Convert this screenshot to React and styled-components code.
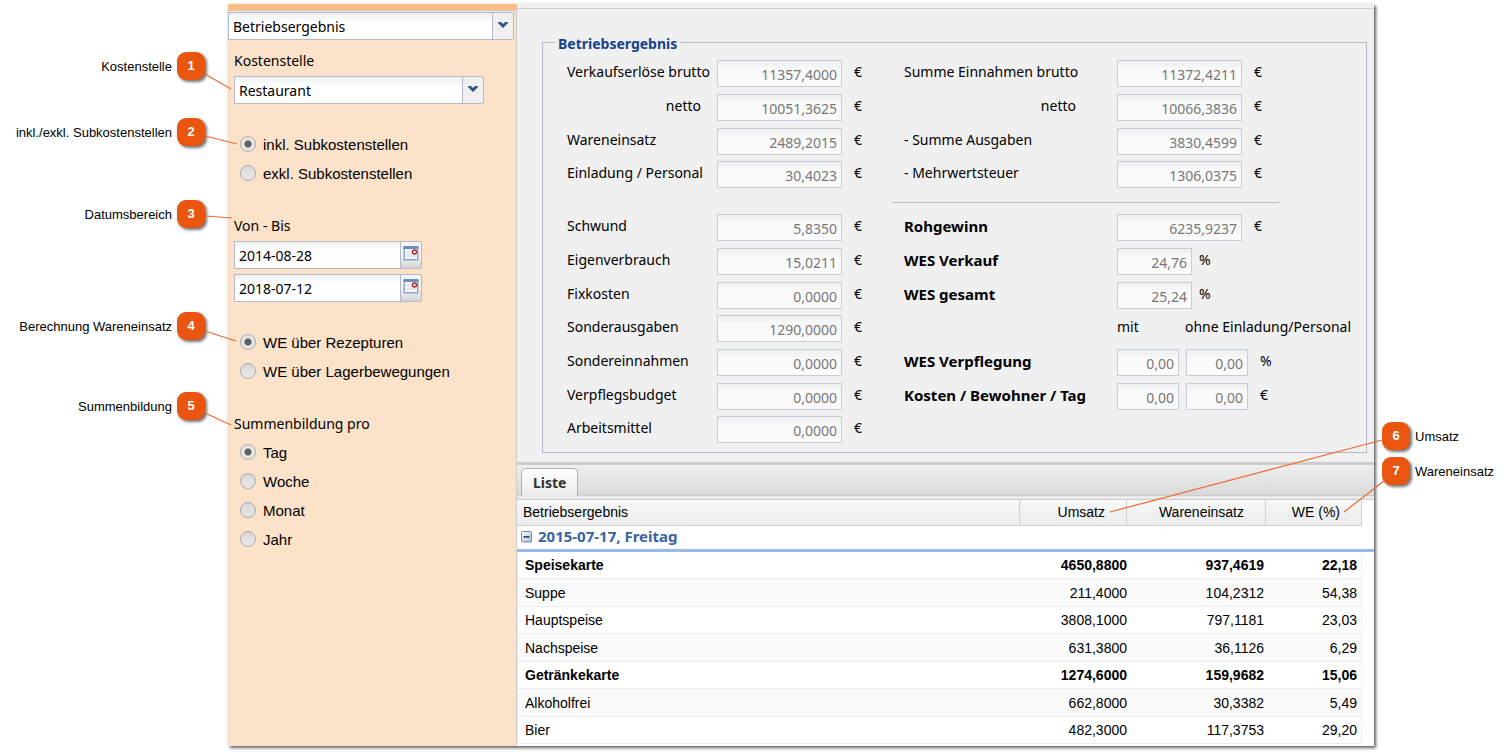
import React, { useState } from "react";
import styled, { createGlobalStyle } from "styled-components";

const GlobalStyle = createGlobalStyle`
  * {
    box-sizing: border-box;
  }

  body {
    margin: 0;
    background: #ffffff;
    color: #000000;
    font-family: "Noto Sans", "Open Sans", sans-serif;
    font-size: 14px;
  }

  input, select, button {
    font: inherit;
  }
`;

const Page = styled.div`
  display: grid;
  grid-template-columns: 228px minmax(0, 1fr) 137px;
  padding: 4px 0 9px;
`;

const Window = styled.main`
  display: grid;
  grid-template-columns: 289px minmax(0, 1fr);
  background: #f0f0f0;
  box-shadow: 2px 2px 3px rgba(0, 0, 0, 0.6), 0 0 2px rgba(0, 0, 0, 0.15);
`;

/* ---------- callouts ---------- */

const Gutter = styled.aside`
  position: relative;
  z-index: 1;
  font-family: "Liberation Sans", Arial, sans-serif;
  font-size: 13px;
`;

const Callout = styled.div`
  position: absolute;
  top: ${(props) => props.$top}px;
  ${(props) => (props.$side === "left" ? "right: 23px;" : "left: 8px;")}
  display: flex;
  flex-direction: ${(props) => (props.$side === "left" ? "row-reverse" : "row")};
  align-items: center;
  gap: 5px;
  white-space: nowrap;
`;

const Pin = styled.span`
  width: 28px;
  height: 28px;
  border-radius: 9px;
  background: #ea5510;
  box-shadow: 2px 2px 3px rgba(0, 0, 0, 0.55);
  color: #ffffff;
  font-weight: bold;
  line-height: 28px;
  text-align: center;
`;

const Lines = styled.svg`
  position: absolute;
  top: 0;
  left: 0;
  overflow: visible;
  pointer-events: none;
  stroke: #ee6a30;
  stroke-width: 1.2;
`;

/* ---------- sidebar ---------- */

const Sidebar = styled.section`
  border-top: 6px solid #fabd84;
  border-right: 1px solid #cccccc;
  background: #fce2c9;
`;

const ModuleBar = styled.div`
  padding: 1px 2px 0 0;
  border-top: 1px solid #cccccc;
`;

const Filters = styled.div`
  display: flex;
  flex-direction: column;
  align-items: flex-start;
  padding: 10px 6px;
`;

const Caption = styled.label`
  line-height: 22px;
  margin-bottom: 4px;
`;

const Combo = styled.div`
  display: grid;
  width: ${(props) => props.$width};
`;

const ComboSelect = styled.select`
  grid-area: 1 / 1;
  height: 28px;
  padding: 0 26px 0 4px;
  appearance: none;
  border: 1px solid #b5b8c8;
  border-radius: 0 2px 2px 0;
  background: linear-gradient(#edf0f0, #ffffff 9px);
  color: #000000;
`;

const Trigger = styled.span`
  grid-area: 1 / 1;
  justify-self: end;
  display: flex;
  justify-content: center;
  width: 22px;
  padding-top: 8px;
  border: 1px solid #b5b8c8;
  border-radius: 0 2px 2px 0;
  background: #f0f0f0;
  pointer-events: none;
`;

const DateField = styled.div`
  display: flex;
  width: 188px;
  height: 28px;
  margin-bottom: 5px;
  border: 1px solid #b5b8c8;
  border-radius: 0 2px 2px 0;
`;

const DateInput = styled.input`
  flex: 1;
  min-width: 0;
  padding: 0 4px;
  border: 0;
  background: linear-gradient(#edf0f0, #ffffff 9px);
`;

const CalendarButton = styled.button`
  display: flex;
  justify-content: center;
  width: 21px;
  padding: 3px 0 0;
  border: 0;
  border-left: 1px solid #b5b8c8;
  background: linear-gradient(#f4f4f4 50%, #d4d4d4);
`;

const RadioGroup = styled.div`
  display: flex;
  flex-direction: column;
  padding-left: 6px;
  margin: ${(props) => props.$margin};
  font-family: "Liberation Sans", Arial, sans-serif;
  font-size: 15px;
`;

const RadioLabel = styled.label`
  display: flex;
  align-items: center;
  gap: 7px;
  height: 29px;
`;

const Radio = styled.input`
  width: 16px;
  height: 16px;
  margin: 0 0 2px;
  appearance: none;
  border: 1px solid #aaaaaa;
  border-radius: 50%;
  background: linear-gradient(#d8d8d8, #e8e8e8);

  &:checked {
    background: radial-gradient(circle, #5f5f5f 3px, #e6e6e6 4px);
  }
`;

/* ---------- result form ---------- */

const Content = styled.section`
  display: flex;
  flex-direction: column;
  min-width: 0;
  margin-top: 4px;
  border-top: 1px solid #cccccc;
`;

const ResultSet = styled.fieldset`
  display: grid;
  grid-template-columns: 337px minmax(0, 1fr);
  row-gap: 19px;
  min-width: 0;
  margin: 23px 7px 9px 25px;
  padding: 8px 0 2px 24px;
  border: 1px solid #b5b8c8;
`;

const Legend = styled.legend`
  height: 20px;
  margin-left: -12px;
  padding: 2px 3px 0;
  color: #15428b;
  font-weight: bold;
  line-height: 20px;
`;

const FieldList = styled.div`
  display: grid;
  grid-auto-rows: 34px 34px 33px;
`;

const TotalsList = styled(FieldList)`
  position: relative;

  &::before {
    content: "";
    position: absolute;
    top: -12px;
    left: -12px;
    width: 387px;
    border-top: 1px solid #b5b8c8;
  }
`;

const FieldRow = styled.div`
  display: flex;
  align-items: flex-start;
`;

const FieldLabel = styled.label`
  flex: none;
  width: ${(props) => props.$width}px;
  padding-right: ${(props) => props.$indent || 0}px;
  font-size: ${(props) => (props.$strong ? 15 : 14)}px;
  font-weight: ${(props) => (props.$strong ? "bold" : "normal")};
  line-height: 24px;
  text-align: ${(props) => (props.$indent ? "right" : "left")};
  white-space: nowrap;
`;

const NumberInput = styled.input`
  width: ${(props) => props.$width}px;
  height: 27px;
  margin-right: 7px;
  padding: 2px 4px 0;
  border: 1px solid #c8cad6;
  border-radius: 0;
  background: linear-gradient(#edf0f0, #fafafa 9px);
  color: #777777;
  text-align: right;
`;

const Unit = styled.span`
  padding-left: ${(props) => (props.$near ? 0 : 5)}px;
  line-height: 24px;
`;

const ColumnHint = styled.span`
  width: ${(props) => props.$width};
  line-height: 24px;
  white-space: nowrap;
`;

/* ---------- list ---------- */

const TabBar = styled.div`
  display: flex;
  height: 37px;
  padding: 3px 4px 0;
  border-top: 3px solid #cccccc;
  background: linear-gradient(#efefef, #d9d9d9 30px, #cccccc 30px, #cccccc 31px, #eaeaea 31px);
`;

const Tab = styled.button`
  height: 28px;
  padding: 0 11px;
  border: 1px solid #b0b0b0;
  border-bottom: 0;
  border-radius: 5px 5px 0 0;
  background: linear-gradient(#ffffff, #eaeaea);
  color: #333333;
  font-weight: bold;
`;

const ListArea = styled.div`
  flex: 1;
  padding-bottom: 2px;
  border-top: 1px solid #cccccc;
  background: #ffffff;
`;

const ListTable = styled.table`
  width: 100%;
  table-layout: fixed;
  border-collapse: separate;
  border-spacing: 0;
  font-family: "Liberation Sans", Arial, sans-serif;
`;

const HeadCell = styled.th`
  height: 26px;
  padding: ${(props) => (props.$numeric ? "0 21px 1px 0" : "0 6px 1px")};
  border-right: 1px solid #d0d0d0;
  border-bottom: 1px solid #d0d0d0;
  background: linear-gradient(#f9f9f9, #eaebed);
  font-weight: normal;
  text-align: ${(props) => (props.$numeric ? "right" : "left")};
`;

const GroupCell = styled.th`
  height: 26px;
  padding: 1px 4px 4px;
  border-bottom: 3px solid #99bbe8;
  color: #3764a0;
  font-family: "Noto Sans", "Open Sans", sans-serif;
  font-size: 15px;
  line-height: 18px;
  text-align: left;
`;

const GroupToggle = styled.button`
  display: inline-flex;
  margin-right: 6px;
  padding: 0;
  border: 0;
  background: none;
  vertical-align: -1px;
`;

const Row = styled.tr`
  height: 27px;
  font-weight: ${(props) => (props.$strong ? "bold" : "normal")};

  &:nth-child(even) {
    height: 28px;
    background: #fafafa;
  }
`;

const Cell = styled.td`
  padding: 0 ${(props) => props.$end || 0}px 0 ${(props) => (props.$numeric ? 0 : 7)}px;
  border-bottom: 1px solid #ededed;
  text-align: ${(props) => (props.$numeric ? "right" : "left")};

  &:first-child {
    border-left: 1px solid #ededed;
  }

  &:nth-child(4) {
    border-right: 1px solid #ededed;
  }
`;

const EdgeCell = styled.td`
  padding: 0;
  background: #ffffff;
`;

const leftCallouts = [
  { id: 1, text: "Kostenstelle", top: 48 },
  { id: 2, text: "inkl./exkl. Subkostenstellen", top: 114 },
  { id: 3, text: "Datumsbereich", top: 196 },
  { id: 4, text: "Berechnung Wareneinsatz", top: 308 },
  { id: 5, text: "Summenbildung", top: 388 },
];

const rightCallouts = [
  { id: 6, text: "Umsatz", top: 418 },
  { id: 7, text: "Wareneinsatz", top: 453 },
];

const salesFields = [
  { id: "brutto", label: "Verkaufserlöse brutto", value: "11357,4000" },
  { id: "netto", label: "netto", value: "10051,3625", indent: 16 },
  { id: "we", label: "Wareneinsatz", value: "2489,2015" },
  { id: "einladung", label: "Einladung / Personal", value: "30,4023" },
];

const incomeFields = [
  { id: "sumBrutto", label: "Summe Einnahmen brutto", value: "11372,4211" },
  { id: "sumNetto", label: "netto", value: "10066,3836", indent: 41 },
  { id: "ausgaben", label: "- Summe Ausgaben", value: "3830,4599" },
  { id: "mwst", label: "- Mehrwertsteuer", value: "1306,0375" },
];

const costFields = [
  { id: "schwund", label: "Schwund", value: "5,8350" },
  { id: "eigen", label: "Eigenverbrauch", value: "15,0211" },
  { id: "fix", label: "Fixkosten", value: "0,0000" },
  { id: "sonderaus", label: "Sonderausgaben", value: "1290,0000" },
  { id: "sonderein", label: "Sondereinnahmen", value: "0,0000" },
  { id: "budget", label: "Verpflegsbudget", value: "0,0000" },
  { id: "arbeit", label: "Arbeitsmittel", value: "0,0000" },
];

const rows = [
  { name: "Speisekarte", umsatz: "4650,8800", we: "937,4619", percent: "22,18", strong: true },
  { name: "Suppe", umsatz: "211,4000", we: "104,2312", percent: "54,38" },
  { name: "Hauptspeise", umsatz: "3808,1000", we: "797,1181", percent: "23,03" },
  { name: "Nachspeise", umsatz: "631,3800", we: "36,1126", percent: "6,29" },
  { name: "Getränkekarte", umsatz: "1274,6000", we: "159,9682", percent: "15,06", strong: true },
  { name: "Alkoholfrei", umsatz: "662,8000", we: "30,3382", percent: "5,49" },
  { name: "Bier", umsatz: "482,3000", we: "117,3753", percent: "29,20" },
];

function Chevron() {
  return (
    <svg width="12" height="8" viewBox="0 0 12 8">
      <path d="M1 1h3l2 2 2-2h3v1L6 7 1 2z" fill="#33528f" />
    </svg>
  );
}

function CalendarIcon() {
  return (
    <svg width="16" height="16" viewBox="0 0 16 16">
      <rect x="0.5" y="1" width="15" height="14.5" rx="1" fill="#8aa6cc" />
      <rect x="0.5" y="1" width="15" height="3" rx="1" fill="#6c8ebf" />
      <rect x="2" y="4" width="12" height="10" fill="#ffffff" />
      <path d="M5 4v10M8 4v10M11 4v10M2 7.5h12M2 11h12" stroke="#d5d9e0" />
      <circle cx="11.5" cy="7" r="2" fill="#ffffff" stroke="#a8262c" strokeWidth="1.5" />
    </svg>
  );
}

function CollapseIcon() {
  return (
    <svg width="11" height="12" viewBox="0 0 11 12">
      <defs>
        <linearGradient id="collapse" x1="0" y1="0" x2="1" y2="1">
          <stop offset="0" stopColor="#ffffff" />
          <stop offset="1" stopColor="#a9b8d0" />
        </linearGradient>
      </defs>
      <rect x="0.5" y="0.5" width="10" height="10.5" rx="1" fill="url(#collapse)" stroke="#7388ab" />
      <path d="M2.5 5.8h6" stroke="#26456f" strokeWidth="1.6" />
    </svg>
  );
}

function ComboBox({ id, width, value, ...rest }) {
  return (
    <Combo $width={width}>
      <ComboSelect id={id} defaultValue={value} {...rest}>
        <option>{value}</option>
      </ComboSelect>
      <Trigger>
        <Chevron />
      </Trigger>
    </Combo>
  );
}

function DatePicker({ id, value, label }) {
  return (
    <DateField>
      <DateInput id={id} type="text" defaultValue={value} aria-label={label} />
      <CalendarButton type="button" aria-label="Kalender">
        <CalendarIcon />
      </CalendarButton>
    </DateField>
  );
}

function Radios({ name, options, margin }) {
  const [selected, setSelected] = useState(options[0]);

  return (
    <RadioGroup role="radiogroup" $margin={margin}>
      {options.map((option) => (
        <RadioLabel key={option}>
          <Radio
            type="radio"
            name={name}
            checked={selected === option}
            onChange={() => setSelected(option)}
          />
          {option}
        </RadioLabel>
      ))}
    </RadioGroup>
  );
}

function Field({ id, label, values, labelWidth, inputWidth = 125, unit = "€", indent, strong, near }) {
  return (
    <FieldRow>
      <FieldLabel htmlFor={id} $width={labelWidth} $indent={indent} $strong={strong}>
        {label}
      </FieldLabel>
      {values.map((value, i) => (
        <NumberInput
          key={i}
          id={i === 0 ? id : undefined}
          aria-label={i === 0 ? undefined : `${label} ohne`}
          $width={inputWidth}
          defaultValue={value}
          disabled
        />
      ))}
      <Unit $near={near}>{unit}</Unit>
    </FieldRow>
  );
}

function App() {
  return (
    <>
      <GlobalStyle />
      <Page>
        <Gutter>
          {leftCallouts.map((item) => (
            <Callout key={item.id} $side="left" $top={item.top}>
              <Pin>{item.id}</Pin>
              {item.text}
            </Callout>
          ))}
          <Lines width="228" height="440">
            <path d="M205 70L231 85M205 132L237 140M205 212L232 214M205 327L236 337M205 409L231 421" />
          </Lines>
        </Gutter>

        <Window>
          <Sidebar>
            <ModuleBar>
              <ComboBox width="100%" value="Betriebsergebnis" aria-label="Auswertung" />
            </ModuleBar>
            <Filters>
              <Caption htmlFor="kostenstelle">Kostenstelle</Caption>
              <ComboBox id="kostenstelle" width="250px" value="Restaurant" />
              <Radios
                name="subkostenstellen"
                margin="26px 0 27px"
                options={["inkl. Subkostenstellen", "exkl. Subkostenstellen"]}
              />
              <Caption htmlFor="von">Von - Bis</Caption>
              <DatePicker id="von" value="2014-08-28" />
              <DatePicker id="bis" value="2018-07-12" label="Bis" />
              <Radios
                name="wareneinsatz"
                margin="21px 0 27px"
                options={["WE über Rezepturen", "WE über Lagerbewegungen"]}
              />
              <Caption as="span">Summenbildung pro</Caption>
              <Radios name="summe" margin="-1px 0 0" options={["Tag", "Woche", "Monat", "Jahr"]} />
            </Filters>
          </Sidebar>

          <Content>
            <ResultSet>
              <Legend>Betriebsergebnis</Legend>
              <FieldList>
                {salesFields.map((field) => (
                  <Field key={field.id} {...field} values={[field.value]} labelWidth={150} />
                ))}
              </FieldList>
              <FieldList>
                {incomeFields.map((field) => (
                  <Field key={field.id} {...field} values={[field.value]} labelWidth={213} />
                ))}
              </FieldList>
              <FieldList>
                {costFields.map((field) => (
                  <Field key={field.id} {...field} values={[field.value]} labelWidth={150} />
                ))}
              </FieldList>
              <TotalsList>
                <Field id="roh" label="Rohgewinn" values={["6235,9237"]} labelWidth={213} strong />
                <Field id="wesv" label="WES Verkauf" values={["24,76"]} labelWidth={213} inputWidth={75} unit="%" strong near />
                <Field id="wesg" label="WES gesamt" values={["25,24"]} labelWidth={213} inputWidth={75} unit="%" strong near />
                <FieldRow>
                  <FieldLabel as="span" $width={213} />
                  <ColumnHint $width="68px">mit</ColumnHint>
                  <ColumnHint $width="auto">ohne Einladung/Personal</ColumnHint>
                </FieldRow>
                <Field id="wesp" label="WES Verpflegung" values={["0,00", "0,00"]} labelWidth={213} inputWidth={62} unit="%" strong />
                <Field id="kosten" label="Kosten / Bewohner / Tag" values={["0,00", "0,00"]} labelWidth={213} inputWidth={62} strong />
              </TotalsList>
            </ResultSet>

            <TabBar role="tablist">
              <Tab type="button" role="tab" aria-selected="true">Liste</Tab>
            </TabBar>
            <ListArea>
              <ListTable>
                <colgroup>
                  <col />
                  <col width="107" />
                  <col width="139" />
                  <col width="96" />
                  <col width="12" />
                </colgroup>
                <thead>
                  <tr>
                    <HeadCell>Betriebsergebnis</HeadCell>
                    <HeadCell $numeric>Umsatz</HeadCell>
                    <HeadCell $numeric>Wareneinsatz</HeadCell>
                    <HeadCell $numeric>WE (%)</HeadCell>
                    <EdgeCell />
                  </tr>
                  <tr>
                    <GroupCell colSpan={5}>
                      <GroupToggle type="button" aria-label="Gruppe einklappen">
                        <CollapseIcon />
                      </GroupToggle>
                      2015-07-17, Freitag
                    </GroupCell>
                  </tr>
                </thead>
                <tbody>
                  {rows.map((row) => (
                    <Row key={row.name} $strong={row.strong}>
                      <Cell>{row.name}</Cell>
                      <Cell $numeric>{row.umsatz}</Cell>
                      <Cell $numeric $end={2}>{row.we}</Cell>
                      <Cell $numeric $end={4}>{row.percent}</Cell>
                      <EdgeCell />
                    </Row>
                  ))}
                </tbody>
              </ListTable>
            </ListArea>
          </Content>
        </Window>

        <Gutter>
          {rightCallouts.map((item) => (
            <Callout key={item.id} $side="right" $top={item.top}>
              <Pin>{item.id}</Pin>
              {item.text}
            </Callout>
          ))}
          <Lines width="137" height="520">
            <path d="M8 436L-264 508M10 477L-30 508" />
          </Lines>
        </Gutter>
      </Page>
    </>
  );
}

export default App;
